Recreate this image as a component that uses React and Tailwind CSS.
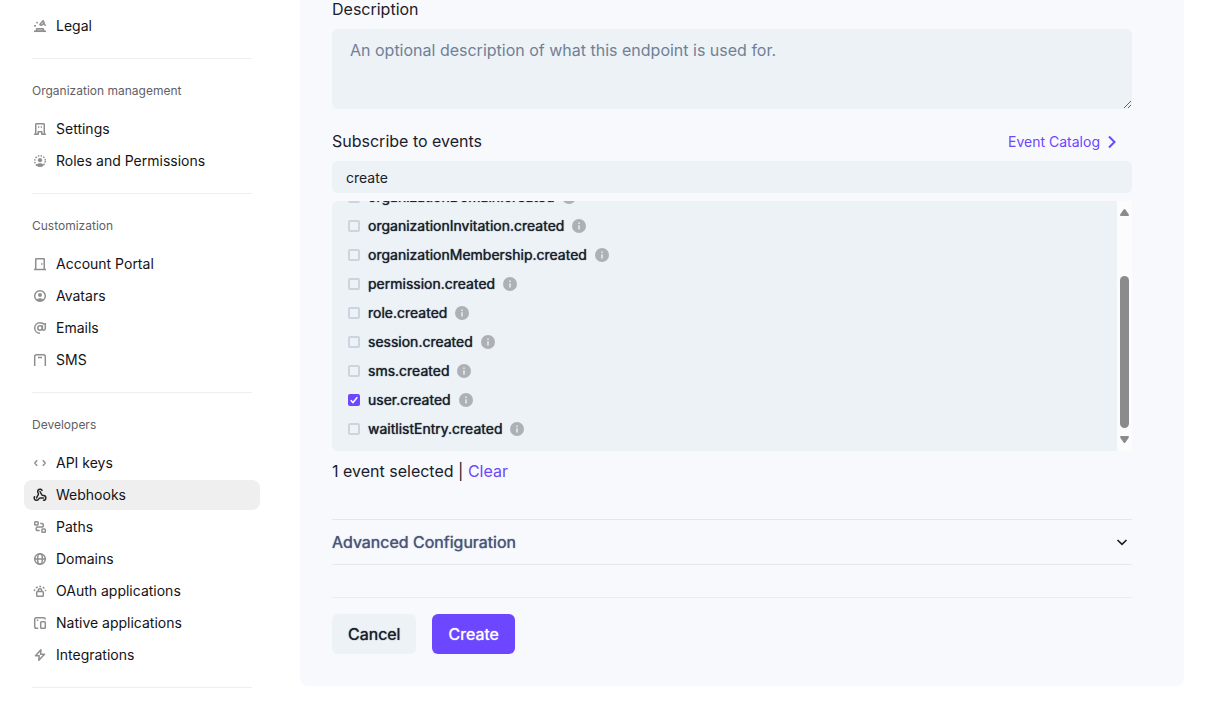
import { useState } from "react";
import { Webhook } from "lucide-react";

const paths = {
  legal: (
    <>
      <path d="M4.800 10.700h6.400l.7 2.600H4.100z" fill="currentColor" fillOpacity=".4" />
      <path d="M2 13.300h12" />
      <path d="M7.900 6.500 11 2.700 12.300 5.200 9.300 7.400zM11.500 5.500 13.700 7.800M4.500 4.100l1.200 1.200M2 7.700h2" />
    </>
  ),
  building: (
    <>
      <path d="M3.750 13.200V3.400c0-.4.300-.65.650-.65h7.200c.4 0 .65.3.65.65v9.800M2 13.250h4.250v-2.500h3.500v2.500H14" />
      <path d="M6 6.100h1.300M8.700 6.100H10" />
    </>
  ),
  roles: (
    <>
      <circle cx="8" cy="8" r="5.300" strokeDasharray="1.500 1.270" />
      <circle cx="8" cy="7.200" r="2.100" fill="currentColor" stroke="none" />
      <path d="M4.200 12.200c.9-1.400 2.200-1.900 3.800-1.900s2.900.5 3.800 1.900c-1 1.200-2.300 1.700-3.800 1.700s-2.800-.5-3.800-1.700z" fill="currentColor" stroke="none" />
    </>
  ),
  door: (
    <>
      <path d="M3.750 13.200V3.100c0-.2.150-.35.350-.35h7.800c.2 0 .35.150.35.350v10.100M2 13.400h12" />
      <path d="M9 8h1.500" strokeWidth="1.600" />
    </>
  ),
  avatar: (
    <>
      <circle cx="8" cy="8" r="5.300" />
      <circle cx="8" cy="7.100" r="2" fill="currentColor" stroke="none" />
      <path d="M4.600 11.700c.8-1 2-1.500 3.400-1.500s2.600.5 3.400 1.500c-.9.9-2 1.500-3.400 1.500s-2.500-.6-3.400-1.500z" fill="currentColor" stroke="none" />
    </>
  ),
  at: (
    <>
      <circle cx="8" cy="8" r="2.200" />
      <path d="M10.400 5.300v3.400c0 .9.600 1.500 1.400 1.500.9 0 1.500-.7 1.500-1.700V3M12.600 4.600C11.400 3.300 9.900 2.700 8 2.700 5 2.700 2.700 5 2.700 8s2.300 5.300 5.300 5.300" />
    </>
  ),
  sms: <path d="M2.700 14V4.500c0-1 .8-1.800 1.800-1.800h7c1 0 1.800.8 1.800 1.800V14M6 5.500h4" />,
  code: <path d="M5.200 5.300 2.700 8 5.200 10.700M10.800 5.300 13.300 8 10.800 10.700" />,
  paths: (
    <>
      <rect x="2.700" y="2.700" width="3.400" height="3.400" rx=".8" />
      <rect x="9.900" y="9.900" width="3.400" height="3.400" rx=".8" />
      <path d="M8.200 4.500h1.500c1 0 1.700.7 1.700 1.700S10.700 8 9.700 8H5.800c-1 0-1.700.7-1.700 1.700s.7 1.800 1.700 1.800h1.900" />
    </>
  ),
  globe: (
    <>
      <circle cx="8" cy="8" r="5.300" />
      <ellipse cx="8" cy="8" rx="2.400" ry="5.300" />
      <path d="M2.700 8h10.600" />
    </>
  ),
  lock: (
    <>
      <rect x="4.700" y="8.500" width="6.600" height="4.800" rx=".9" />
      <path d="M6.300 8.300V7.400c0-1 .7-1.600 1.700-1.600s1.700.6 1.700 1.600v.9" />
      <path d="M2.300 8.200A5.800 5.800 0 0 1 13.700 8.200" strokeDasharray="1.900 1.700" />
    </>
  ),
  native: (
    <>
      <path d="M6.200 13.300H4.500c-1 0-1.800-.8-1.800-1.800v-7c0-1 .8-1.800 1.800-1.800h7c1 0 1.800.8 1.800 1.800M4.800 5.300h1.500" />
      <rect x="8.700" y="6.700" width="4.600" height="6.600" rx=".9" />
    </>
  ),
  bolt: <path d="M8.900 2.700 3.500 8.700H7.200l-.4 4.600 5.700-6H8.600z" />,
};

function Icon({ name }) {
  if (name === "webhook") {
    return (
      <span className="flex size-4 items-center justify-center">
        <Webhook className="size-3.5" strokeWidth={2.6} aria-hidden="true" />
      </span>
    );
  }
  return (
    <svg viewBox="0 0 16 16" className="size-4 shrink-0" fill="none" stroke="currentColor" strokeWidth="1.500" strokeLinejoin="round" aria-hidden="true">
      {paths[name]}
    </svg>
  );
}

const groups = [
  { title: null, items: [["Legal", "legal"]] },
  { title: "Organization management", items: [["Settings", "building"], ["Roles and Permissions", "roles"]] },
  { title: "Customization", items: [["Account Portal", "door"], ["Avatars", "avatar"], ["Emails", "at"], ["SMS", "sms"]] },
  {
    title: "Developers",
    items: [
      ["API keys", "code"],
      ["Webhooks", "webhook"],
      ["Paths", "paths"],
      ["Domains", "globe"],
      ["OAuth applications", "lock"],
      ["Native applications", "native"],
      ["Integrations", "bolt"],
    ],
  },
];

function Sidebar() {
  return (
    <nav className="w-[300px] shrink-0 pt-[11px] pr-10 pl-6">
      {groups.map((group) => (
        <section key={group.items[0][0]}>
          {group.title && <h2 className="mx-2 mt-[22px] mb-[13px] text-xs leading-5 text-[#5f6066]">{group.title}</h2>}
          <ul className="flex flex-col gap-0.5">
            {group.items.map(([label, icon]) => {
              const active = label === "Webhooks";
              return (
                <li key={label}>
                  <a
                    href="#"
                    aria-current={active ? "page" : undefined}
                    className={`flex h-[30px] items-center gap-2 rounded-lg px-2 text-sm text-[#131316] ${active ? "bg-[#efefef]" : ""}`}
                  >
                    <span className={active ? "text-[#2a2a2d]" : "text-[#8f8f91]"}>
                      <Icon name={icon} />
                    </span>
                    {label}
                  </a>
                </li>
              );
            })}
          </ul>
          <hr className="mx-2 mt-[17px] border-[#eeeeef]" />
        </section>
      ))}
    </nav>
  );
}

const events = [
  "organizationDomain.created",
  "organizationInvitation.created",
  "organizationMembership.created",
  "permission.created",
  "role.created",
  "session.created",
  "sms.created",
  "user.created",
  "waitlistEntry.created",
];

function EventRow({ name, checked, onChange }) {
  return (
    <li className="flex h-[29px] shrink-0 items-center gap-2">
      <label className="flex items-center gap-2 text-sm text-[#1a202c] [text-shadow:0_0_1px_currentColor]">
        <span className="relative flex">
          <input
            type="checkbox"
            checked={checked}
            onChange={onChange}
            className="size-3 appearance-none rounded-[2px] border-2 border-[#cbd5e0] checked:border-[#6c47ff] checked:bg-[#6c47ff]"
          />
          {checked && (
            <svg viewBox="0 0 12 12" className="pointer-events-none absolute inset-0 size-3" fill="none" stroke="white" strokeWidth="1.500" aria-hidden="true">
              <path d="M2.800 6.200 5 8.500 9.300 3.300" />
            </svg>
          )}
        </span>
        {name}
      </label>
      <svg viewBox="0 0 14 14" className="size-3.5" aria-hidden="true">
        <circle cx="7" cy="7" r="7" fill="#adb1b6" />
        <path d="M6.300 3.600h1.400V5H6.300zM6.300 6.200h1.400v4.200H6.300z" fill="#edf2f7" />
      </svg>
    </li>
  );
}

export default function App() {
  const [selected, setSelected] = useState(["user.created"]);
  const toggle = (name) =>
    setSelected((list) => (list.includes(name) ? list.filter((item) => item !== name) : [...list, name]));

  return (
    <div className="flex items-start bg-white font-['Inter',sans-serif]">
      <Sidebar />
      <main className="min-w-0 grow pr-[31px]">
        <form className="rounded-b-lg bg-[#f8f9fd] px-8 pb-8 text-[#1a202c]" onSubmit={(e) => e.preventDefault()}>
          <div className="max-w-[800px]">
            <label htmlFor="description" className="block pb-[11px] text-base leading-[18px]">
              Description
            </label>
            <textarea
              id="description"
              placeholder="An optional description of what this endpoint is used for."
              className="block h-20 w-full rounded-md bg-[#ecf2f6] px-[18px] py-[9px] text-base placeholder:text-[#718096]"
            />

            <div className="flex items-center justify-between pt-5 pr-[14px] pb-2">
              <label htmlFor="search" className="text-base">
                Subscribe to events
              </label>
              <a href="#" className="flex items-center gap-1.5 pt-0.5 text-sm text-[#6c47ff]">
                Event Catalog
                <svg viewBox="0 0 12 14" className="h-3.5 w-3" fill="none" stroke="currentColor" strokeWidth="2" aria-hidden="true">
                  <path d="M3 1.500 8.500 7 3 12.500" />
                </svg>
              </a>
            </div>
            <input
              id="search"
              type="text"
              defaultValue="create"
              className="block h-8 w-full rounded-md bg-[#ecf2f6] px-3.5 text-sm"
            />

            <div className="mt-2 flex h-[250px]">
              <ul className="flex grow flex-col justify-end overflow-hidden rounded-l-md bg-[#ecf2f6] px-4 pb-2">
                {events.map((name) => (
                  <EventRow key={name} name={name} checked={selected.includes(name)} onChange={() => toggle(name)} />
                ))}
              </ul>
              <div className="flex w-[15px] flex-col items-center bg-[#fcfcfc] py-2 text-[#8b8b8b]" aria-hidden="true">
                <svg viewBox="0 0 9 7" className="h-[7px] w-[9px]" fill="currentColor">
                  <path d="M3.600.600Q4.500-.400 5.400.600L8.700 5.200Q9.300 7 8 7H1Q-.300 7 .300 5.200z" />
                </svg>
                <div className="mt-[60px] mb-2 w-[9px] grow rounded-full bg-[#8b8b8b]" />
                <svg viewBox="0 0 9 7" className="h-[7px] w-[9px]" fill="currentColor">
                  <path d="M3.600 6.400Q4.500 7.400 5.400 6.400L8.700 1.800Q9.300 0 8 0H1Q-.300 0 .300 1.800z" />
                </svg>
              </div>
            </div>

            <p className="pt-2 text-base">
              {selected.length} event selected |{" "}
              <button type="button" onClick={() => setSelected([])} className="text-[#6c47ff]">
                Clear
              </button>
            </p>

            <button
              type="button"
              className="mt-9 flex h-[46px] w-full items-center justify-between border-y border-[#e2e8f0] pr-1 text-base text-[#4a5578] [text-shadow:0_0_1px_currentColor]"
            >
              Advanced Configuration
              <svg viewBox="0 0 12 12" className="size-3" fill="none" stroke="#1a202c" strokeWidth="1.700" aria-hidden="true">
                <path d="M1.500 4 6 8.300 10.500 4" />
              </svg>
            </button>

            <div className="mt-8 flex gap-4 border-t border-[#e9edf3] pt-4">
              <button type="button" className="h-10 rounded-md bg-[#ecf2f6] px-4 text-base [text-shadow:0_0_1px_currentColor]">
                Cancel
              </button>
              <button type="submit" className="h-10 rounded-md bg-[#6c47ff] px-4 text-base text-white [text-shadow:0_0_1px_currentColor]">
                Create
              </button>
            </div>
          </div>
        </form>
      </main>
    </div>
  );
}
